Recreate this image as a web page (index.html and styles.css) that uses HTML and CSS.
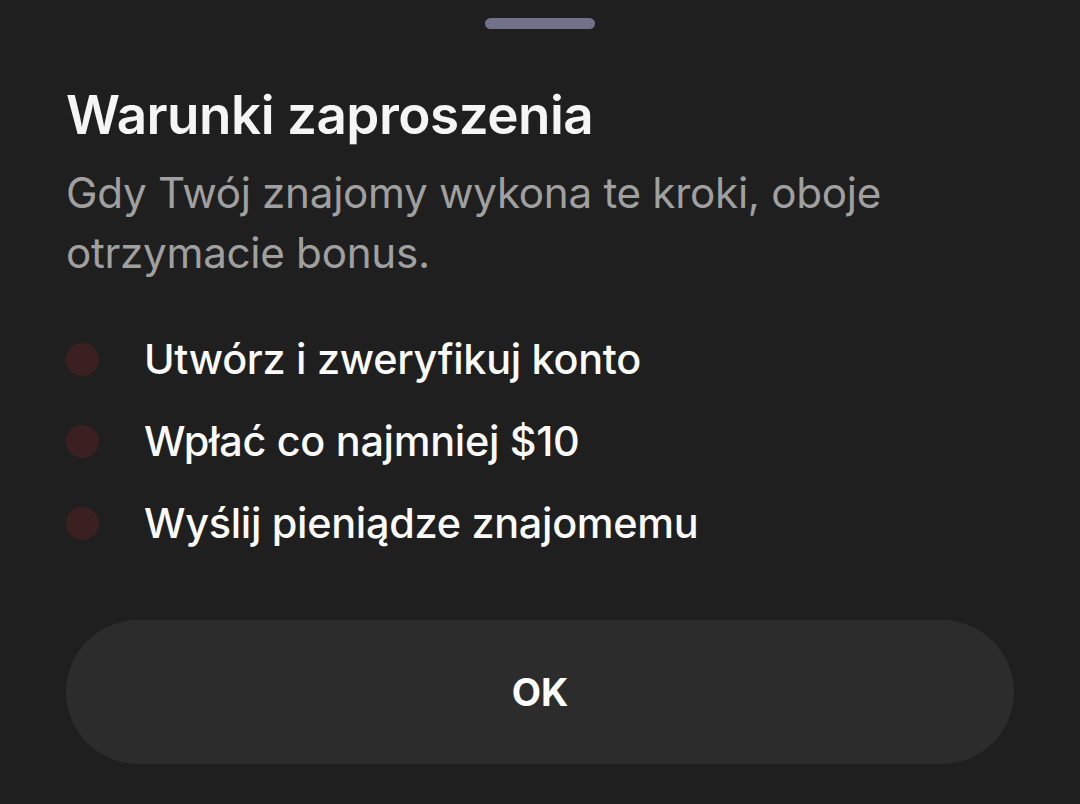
FILE: index.html
```html
<!DOCTYPE html>
<html lang="pl">
<head>
<meta charset="utf-8">
<link rel="stylesheet" href="styles.css">
</head>
<body>
<div class="sheet">
  <div class="handle"></div>
  <h1 class="title">Warunki zaproszenia</h1>
  <p class="subtitle">Gdy Twój znajomy wykona te kroki, oboje otrzymacie bonus.</p>
  <ul class="steps">
    <li class="step"><span class="dot"></span><span class="label">Utwórz i zweryfikuj konto</span></li>
    <li class="step"><span class="dot"></span><span class="label">Wpłać co najmniej $10</span></li>
    <li class="step"><span class="dot"></span><span class="label">Wyślij pieniądze znajomemu</span></li>
  </ul>
  <button class="ok">OK</button>
</div>
</body>
</html>
```
FILE: styles.css
```css
html, body {
  margin: 0;
  padding: 0;
  background: #1f1f1f;
}
body {
  width: 1080px;
  height: 804px;
  overflow: hidden;
  font-family: Inter, "Noto Sans", sans-serif;
  -webkit-font-smoothing: antialiased;
}
.sheet {
  display: flex;
  flex-direction: column;
  padding: 18px 66px 0 66px;
}
.handle {
  align-self: center;
  width: 110px;
  height: 11px;
  border-radius: 6px;
  background: #70728a;
}
.title {
  margin: 52px 0 0 0;
  font-size: 53px;
  font-weight: 600;
  line-height: 68px;
  color: #f5f5f5;
  letter-spacing: -0.5px;
}
.subtitle {
  margin: 14px 0 0 0;
  font-size: 42.2px;
  font-weight: 400;
  line-height: 60px;
  color: #a0a0a0;
  letter-spacing: -0.3px;
  max-width: 880px;
}
.steps {
  list-style: none;
  margin: 46px 0 0 0;
  padding: 0;
  display: flex;
  flex-direction: column;
  gap: 22px;
}
.step {
  display: flex;
  align-items: center;
  gap: 45px;
  height: 60px;
}
.dot {
  width: 33px;
  height: 33px;
  border-radius: 50%;
  background: #3a2020;
  flex: none;
}
.label {
  font-size: 41.4px;
  font-weight: 500;
  color: #fafafa;
  letter-spacing: -0.3px;
}
.ok {
  margin-top: 67px;
  height: 144px;
  width: 948px;
  border: none;
  border-radius: 72px;
  background: #2c2c2c;
  color: #ffffff;
  font-family: Inter, "Noto Sans", sans-serif;
  font-size: 38px;
  font-weight: 700;
}
```
